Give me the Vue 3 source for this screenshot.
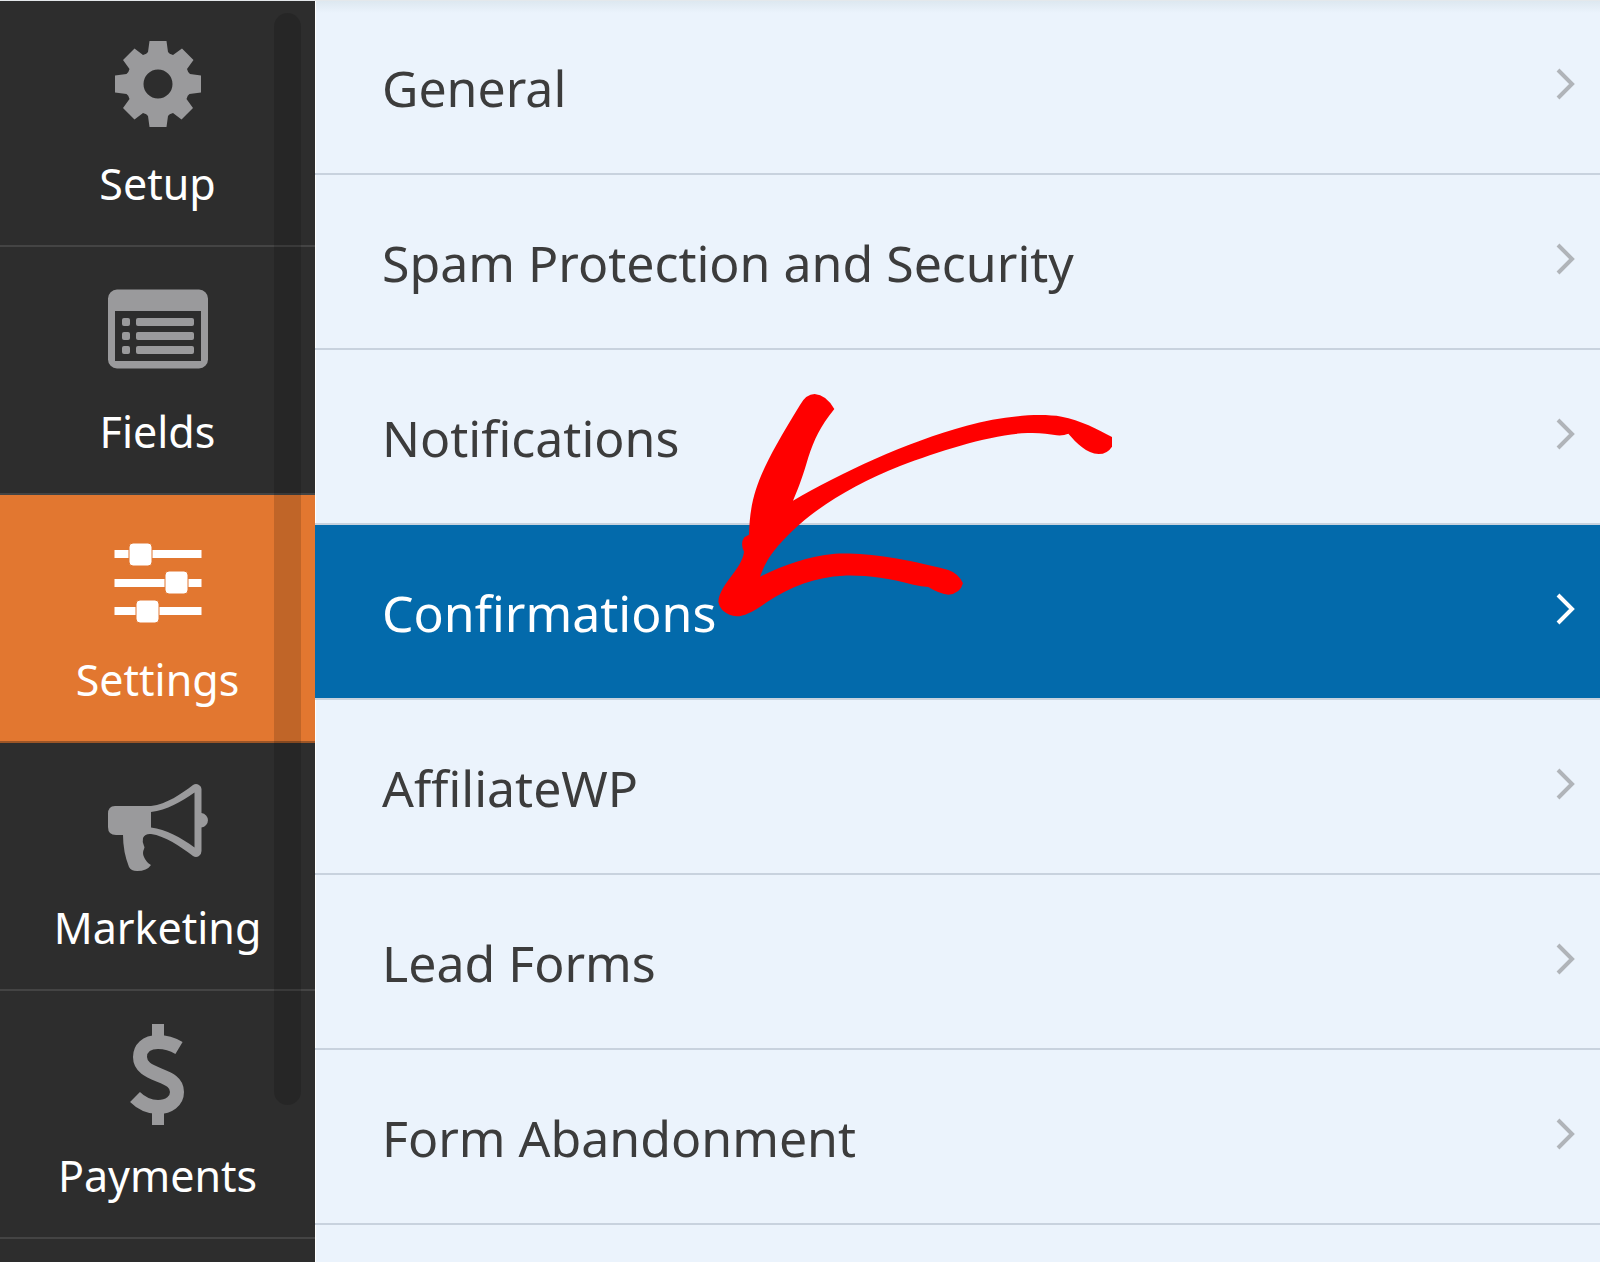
<script setup>
import { ref } from 'vue'

const panels = ['Setup', 'Fields', 'Settings', 'Marketing', 'Payments']
const sections = [
  'General',
  'Spam Protection and Security',
  'Notifications',
  'Confirmations',
  'AffiliateWP',
  'Lead Forms',
  'Form Abandonment',
]

const activePanel = ref('Settings')
const activeSection = ref('Confirmations')
</script>

<template>
  <div class="builder">
    <nav class="toolbar" aria-label="Form builder">
      <button
        v-for="panel in panels"
        :key="panel"
        type="button"
        class="panel-btn"
        :class="{ active: panel === activePanel }"
        @click="activePanel = panel"
      >
        <svg class="panel-icon" viewBox="0 0 102 104" fill="currentColor" aria-hidden="true">
          <path
            v-if="panel === 'Setup'"
            fill-rule="evenodd"
            d="M42.5 9h17l1.500 11q1 2 5 3l9-6.500 11.500 11.500-6.500 9q1 4 3 5L94 43.500v17L82.500 62q-2 1-3 5l6.500 9-11.500 11.500-8.500-6.500q-4 1-5 3l-1.500 11h-17L41 84q-1-2-5-3l-8.500 6.500L16 76l6.500-9q-1-4-3-5L8 60.500v-17L19.500 42q2-1 3-5L16 28l11.500-11.500 8.500 6.500q4-1 5-3zM51 37.500a14.500 14.500 0 1 0 0 29 14.500 14.500 0 0 0 0-29z"
          />
          <g v-else-if="panel === 'Fields'">
            <path
              fill-rule="evenodd"
              d="M10 9.500h82a9 9 0 0 1 9 9v61a9 9 0 0 1-9 9H10a9 9 0 0 1-9-9v-61a9 9 0 0 1 9-9zM8 31v50h86V31z"
            />
            <rect x="15" y="38" width="8" height="8" rx="2" />
            <rect x="15" y="52" width="8" height="8" rx="2" />
            <rect x="15" y="66" width="8" height="8" rx="2" />
            <rect x="29" y="38" width="58" height="8" rx="2" />
            <rect x="29" y="52" width="58" height="8" rx="2" />
            <rect x="29" y="66" width="58" height="8" rx="2" />
          </g>
          <g v-else-if="panel === 'Settings'">
            <path d="M7.500 22h87v8h-87zM7.500 51h87v8h-87zM7.500 79h87v8h-87z" />
            <g class="knobs">
              <rect x="22" y="15" width="23" height="23" rx="4" />
              <rect x="58" y="43" width="23" height="23" rx="4" />
              <rect x="29" y="72" width="23" height="23" rx="4" />
            </g>
          </g>
          <g v-else-if="panel === 'Marketing'">
            <path
              fill-rule="evenodd"
              d="M8 30h36C60 28 74 18 86 9q3-2 6 0 2.500 1.500 2.500 4v24a7.300 7.300 0 0 1 0 14.500V75q0 3-2.500 5-3 2-6 0C73 70 58 60 44 58q-6-.5-8 4-1 4 1 8 1 1 0 3-2 4 0 8 2 5 7 8-4 6-14 6-6 0-8-4-6-15-6-32H9q-8 0-8-8V38q0-8 7-8zM44 36v15.500c15 2 30 10 43.500 20v-55C74 26 60 34 44 36z"
            />
          </g>
          <g v-else>
            <path d="M45 0h12v14H45zM45 86h12v15H45z" />
            <path
              fill="none"
              stroke="currentColor"
              stroke-width="14"
              d="M72 24Q62 18 51 18C39 18 33 25 33 33C33 43 42 47 52 51C62 55 70 58 70 68C70 77 62 83 51 83Q38 83 28 73"
            />
          </g>
        </svg>
        <span class="panel-label">{{ panel }}</span>
      </button>
      <span class="scroll-thumb"></span>
    </nav>

    <main class="sections">
      <ul class="section-list">
        <li v-for="section in sections" :key="section" class="section-item">
          <a
            href="#"
            class="section-link"
            :class="{ active: section === activeSection }"
            @click.prevent="activeSection = section"
          >
            <span>{{ section }}</span>
            <svg class="chevron" viewBox="0 0 20 32" aria-hidden="true">
              <path d="M2 2l14 14L2 30" />
            </svg>
          </a>
          <svg
            v-if="section === 'Confirmations'"
            class="pointer"
            viewBox="0 0 1290 750"
            aria-hidden="true"
          >
            <path
              d="M300 75Q318 42 344 42Q378 44 403 87C360 140 342 180 325 232C310 285 297 320 279 362C420 280 620 185 800 137C900 110 1010 98 1085 110C1140 120 1195 148 1236 171V200Q1222 222 1196 222C1160 220 1130 190 1105 161Q1090 168 1070 166C1040 160 1010 157 965 160C860 168 720 212 600 258C480 305 370 370 300 432C230 495 200 535 180 590C250 555 320 530 405 521C500 518 600 532 745 570Q775 580 789 610Q780 642 745 644Q715 640 685 621Q665 620 640 614C560 594 500 585 430 587C350 590 270 620 200 667Q140 710 110 709Q62 702 55 665C60 610 125 570 132 515Q120 490 133 472L147 464C150 340 180 270 300 75Z"
            />
          </svg>
        </li>
      </ul>
    </main>
  </div>
</template>

<style>
body {
  margin: 0;
  background: #ebf3fc;
}
</style>

<style scoped>
.builder {
  display: flex;
  height: 100vh;
  box-sizing: border-box;
  overflow: hidden;
  border-top: 1px solid #e4e8eb;
  font-family: "Segoe UI", "Noto Sans", "Open Sans", sans-serif;
}

.toolbar {
  position: relative;
  flex: 0 0 315px;
  background: #2d2d2d;
  overflow: hidden;
}

.panel-btn {
  display: flex;
  flex-direction: column;
  align-items: center;
  gap: 18px;
  width: 100%;
  height: 248px;
  box-sizing: border-box;
  padding: 33px 0 0;
  border: 0;
  border-bottom: 2px solid #444;
  background: transparent;
  color: #9a9a9c;
  font-family: inherit;
  cursor: pointer;
}

.panel-btn:first-child {
  margin-top: -2px;
}

.panel-btn.active {
  background: #e27730;
  border-bottom-color: #9c5526;
  color: #fff;
}

.panel-icon {
  width: 102px;
  height: 104px;
}

.knobs {
  stroke: #e27730;
  stroke-width: 1;
}

.panel-label {
  color: #fff;
  font-size: 43px;
  line-height: 60px;
}

.scroll-thumb {
  position: absolute;
  top: 12px;
  left: 274px;
  width: 27px;
  height: 1092px;
  border-radius: 14px;
  background: rgba(0, 0, 0, 0.15);
  pointer-events: none;
}

.sections {
  flex: 1;
  min-width: 0;
  background: linear-gradient(#dde8f0, #ebf3fc 12px);
  box-shadow: inset 1px 0 #fff;
}

.section-list {
  margin: -1px 0 0;
  padding: 0;
  list-style: none;
}

.section-item {
  position: relative;
}

.section-link {
  display: flex;
  align-items: center;
  justify-content: space-between;
  height: 175px;
  box-sizing: border-box;
  padding: 2px 24px 0 67px;
  border-bottom: 2px solid #c8d2de;
  color: #3c3c3c;
  font-size: 50px;
  line-height: 72px;
  text-decoration: none;
}

.section-link.active {
  background: #036aab;
  color: #fff;
}

.chevron {
  width: 20px;
  height: 32px;
  margin-bottom: 8px;
  fill: none;
  stroke: #b0b4b9;
  stroke-width: 4;
}

.active .chevron {
  stroke: #fff;
}

.pointer {
  position: absolute;
  z-index: 1;
  top: -145px;
  left: 385px;
  width: 430px;
  height: 250px;
  fill: #f00;
  pointer-events: none;
}
</style>
